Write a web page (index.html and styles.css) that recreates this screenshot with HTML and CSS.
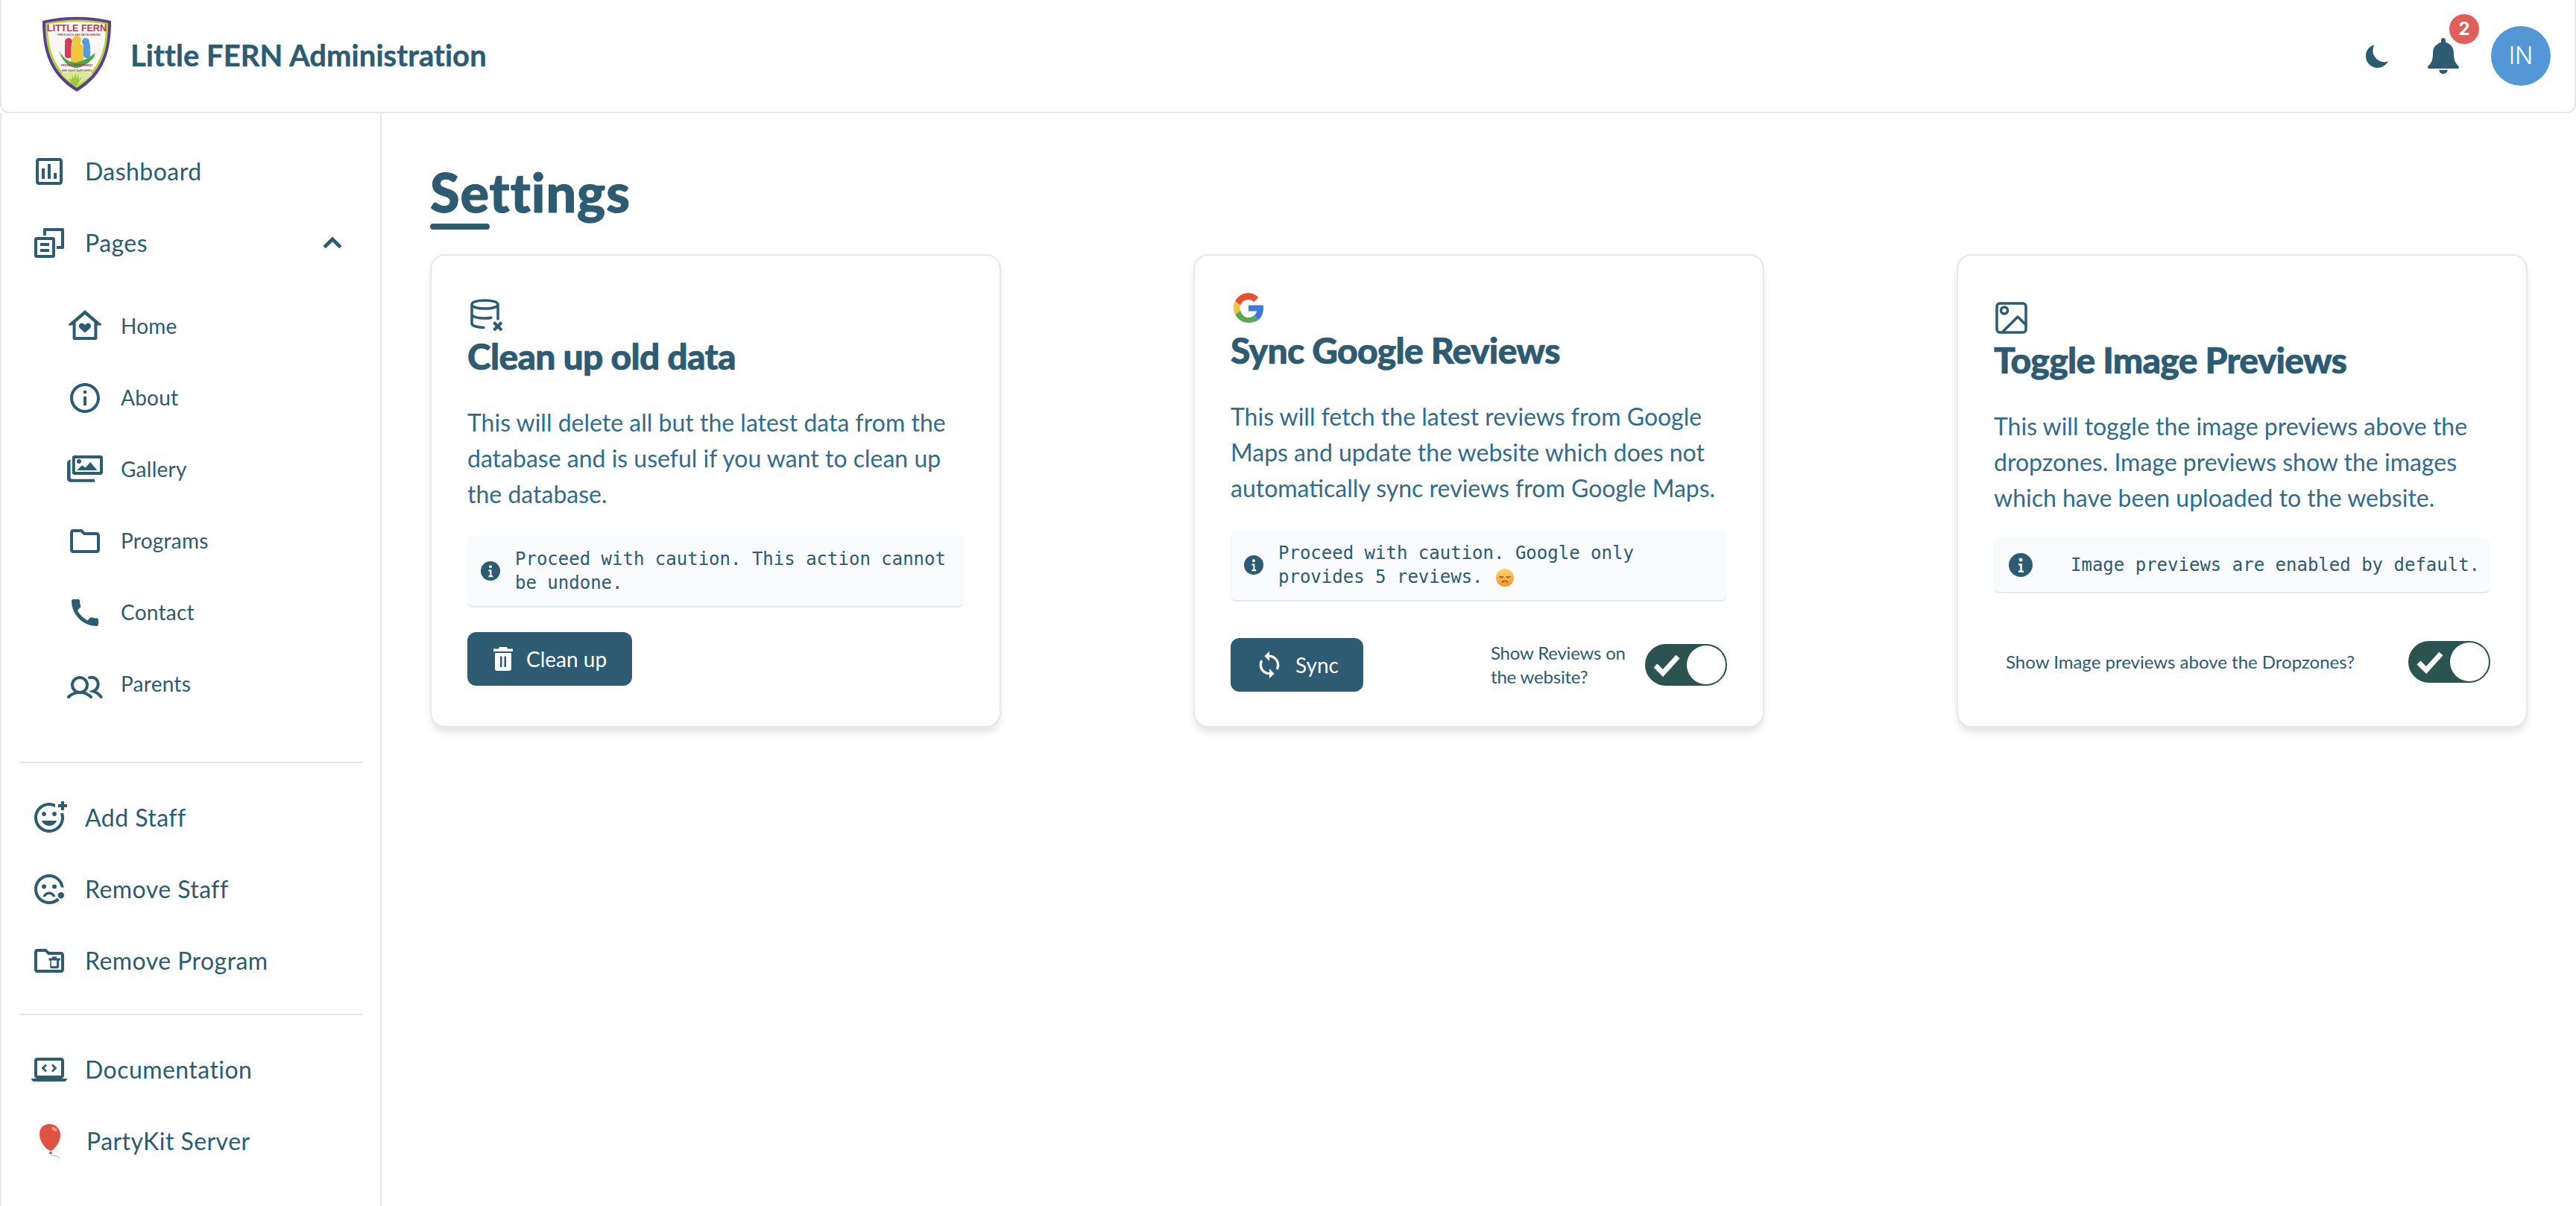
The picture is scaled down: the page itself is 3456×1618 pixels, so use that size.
FILE: index.html
```html
<!DOCTYPE html>
<html lang="en">
<head>
<meta charset="utf-8">
<title>Little FERN Administration</title>
<link rel="stylesheet" href="styles.css">
</head>
<body>
<header class="topbar">
  <div class="brand">
    <svg class="logo" viewBox="0 0 94 102">
      <path d="M1 6C30-1 64-1 93 6 93 45 85 78 47 101 9 78 1 45 1 6Z" fill="#5a3d97"/>
      <path d="M5 9C32 3 62 3 89 9 89 45 81 74 47 96 13 74 5 45 5 9Z" fill="#b4d334"/>
      <path d="M8 11C33 6 61 6 86 11 86 44 78 71 47 92 16 71 8 44 8 11Z" fill="#f7f8f2"/>
      <path d="M26 77C40 72 54 72 69 77 62 84 54 89 47 92 40 88 32 84 26 77Z" fill="#dbe89a"/>
      <text class="logo-name" x="47" y="20" text-anchor="middle">LITTLE FERN</text>
      <text class="logo-sub" x="50" y="25.500" text-anchor="middle">PRE SCHOOL AND DAY BOARDING</text>
      <rect x="31" y="35" width="9" height="21" rx="4" fill="#d6395a"/>
      <rect x="56" y="35" width="9" height="21" rx="4" fill="#5a9bd5"/>
      <path d="M39 42c0-4 3-6 8-6s9 2 9 6v20H39z" fill="#efc63c"/>
      <circle cx="47" cy="32" r="6" fill="#efc63c"/>
      <circle cx="36" cy="34" r="5" fill="#d6395a"/>
      <circle cx="59" cy="34" r="5" fill="#5a9bd5"/>
      <path d="M23 46C30 58 38 62 46 62 55 60 62 56 72 49L70 55C62 64 52 70 44 69 34 67 27 58 23 46Z" fill="#4aa64a"/>
      <text class="logo-sub" x="47" y="67" text-anchor="middle">FRIENDLY ENVIRONMENT</text>
      <text class="logo-sub" x="47" y="73.500" text-anchor="middle">AND RIGHT NURTURING</text>
      <path d="M41 92 37 82l3 3 1-7 2 6 2-8 2 8 2-7 1 8 4-4-5 9-3 3z" fill="#9cc73a"/>
    </svg>
    <span class="brand-name">Little FERN Administration</span>
  </div>
  <div class="top-actions">
    <svg class="moon" viewBox="0 0 30 32"><path d="M11.500 1C4.700 3 0 9 0 16.200 0 24.900 7 32 15.700 32 21.500 32 26.700 28.800 30 23.500 28.800 24 27.400 24.300 25.500 24.300 16.500 24.300 9.500 17 9.500 9.800 9.500 6.500 10.200 3.500 11.500 1Z"/></svg>
    <div class="bell-wrap">
      <svg class="bell" viewBox="0 0 42 48"><path d="M21 48c3.200 0 5.700-2.400 5.700-5.300H15.300C15.300 45.600 17.800 48 21 48ZM38.500 34.500c-2-3-3.500-5.800-3.500-14.500 0-7-4.700-12.700-11-14.300V3c0-1.700-1.300-3-3-3s-3 1.300-3 3v2.700C11.700 7.300 7 13 7 20c0 8.700-1.500 11.500-3.500 14.500C2 36.800 0 37.500 0 39c0 1.200.8 2 2 2h38c1.200 0 2-.8 2-2 0-1.500-2-2.200-3.500-4.500Z"/></svg>
      <span class="badge">2</span>
    </div>
    <div class="avatar">IN</div>
  </div>
</header>

<div class="shell">
  <aside class="sidebar">
    <nav class="nav-group">
      <a class="nav-row">
        <svg class="nav-icon" viewBox="0 0 24 24"><path d="M19 3H5c-1.100 0-2 .9-2 2v14c0 1.100.9 2 2 2h14c1.100 0 2-.9 2-2V5c0-1.100-.9-2-2-2zm0 16H5V5h14v14zM7 10h2v7H7zm4-3h2v10h-2zm4 6h2v4h-2z"/></svg>
        <span class="nav-label">Dashboard</span>
      </a>
      <a class="nav-row">
        <svg class="nav-icon" viewBox="0 0 24 24"><path d="M3.500 8h11c.8 0 1.500.7 1.500 1.500v11c0 .8-.7 1.500-1.500 1.500h-11C2.700 22 2 21.300 2 20.500v-11C2 8.700 2.700 8 3.500 8Zm.5 2v10h10V10ZM8 2.900C8 2.400 8.400 2 8.900 2h12.200c.5 0 .9.4.9.9v12.200c0 .5-.4.9-.9.9H17v-2h3V4H10v3H8ZM6 12h6v2H6Zm0 4h6v2H6Z"/></svg>
        <span class="nav-label">Pages</span>
        <svg class="chevron" viewBox="0 0 24 24"><path d="M12 8l-6 6 1.410 1.410L12 10.830l4.590 4.580L18 14z"/></svg>
      </a>
      <ul class="sub-nav">
        <li class="sub-row">
          <svg class="nav-icon" viewBox="0 0 24 24"><path fill-rule="evenodd" d="M12 1 1 10.500v.7h2.800V20c0 .6.400 1 1 1h14.400c.6 0 1-.4 1-1v-8.800H23v-.7ZM5.800 19V9.300L12 4l6.200 5.300V19Z"/><path d="M12 16.300l-3.500-3.200c-1.800-1.900.9-4.400 2.700-2.800l.8.700.8-.7c1.800-1.600 4.500.9 2.700 2.800Z"/></svg>
          <span class="nav-label">Home</span>
        </li>
        <li class="sub-row">
          <svg class="nav-icon" viewBox="0 0 24 24"><path d="M11 7h2v2h-2zm0 4h2v6h-2zm1-9C6.480 2 2 6.480 2 12s4.480 10 10 10 10-4.480 10-10S17.520 2 12 2zm0 18c-4.410 0-8-3.590-8-8s3.590-8 8-8 8 3.590 8 8-3.590 8-8 8z"/></svg>
          <span class="nav-label">About</span>
        </li>
        <li class="sub-row">
          <svg class="nav-icon" viewBox="0 0 24 24"><path fill-rule="evenodd" d="M4.900 2.500h17.600c.8 0 1.500.7 1.500 1.500v10c0 .8-.7 1.500-1.500 1.500H4.900c-.8 0-1.500-.7-1.500-1.500V4c0-.8.7-1.500 1.500-1.500Zm.5 2v9h16.600v-9Z"/><path d="M2.300 5.300v12c0 .6.500 1.100 1.100 1.100h15.100v2H2.500C1.100 20.400 0 19.300 0 18V7.800c0-1.300 1-2.300 2.300-2.500ZM8 5a1.500 1.500 0 1 1 0 3 1.500 1.500 0 0 1 0-3Zm-1.500 7.500 3.600-3.400 2.200 1.600 3.300-3.700 4.600 5.500Z"/></svg>
          <span class="nav-label">Gallery</span>
        </li>
        <li class="sub-row">
          <svg class="nav-icon" viewBox="0 0 24 24"><path d="M9.170 6l2 2H20v10H4V6h5.170M10 4H4c-1.100 0-1.990.9-1.990 2L2 18c0 1.100.9 2 2 2h16c1.100 0 2-.9 2-2V8c0-1.100-.9-2-2-2h-8l-2-2z"/></svg>
          <span class="nav-label">Programs</span>
        </li>
        <li class="sub-row">
          <svg class="nav-icon" viewBox="0 0 24 24"><path d="M21 15.900v4c0 .6-.5 1.100-1 1.100C10.700 21 3 13.300 3 4c0-.6.500-1 1.100-1H7.500c.6 0 1 .4 1 1 0 1.200.2 2.400.6 3.500.1.400 0 .7-.3 1l-1.800 2c1.400 2.900 3.600 5 6.700 6.700l1.800-1.800c.3-.3.700-.4 1-.3 1.100.4 2.300.6 3.500.6.6 0 1 .5 1 1.200Z"/></svg>
          <span class="nav-label">Contact</span>
        </li>
        <li class="sub-row">
          <svg class="nav-icon" viewBox="0 0 24 24"><path class="line-icon" d="M1 20.500c1.500-1.500 3.500-2.500 6-3h3c2.500.5 4.500 1.500 6 3M8.500 17.500a5 5 0 1 1 0-10 5 5 0 1 1 0 10ZM15 7.600c3-.9 5.800 1 5.800 4.400 0 2-1.200 3.800-3.300 4.700 2 .6 3.700 1.700 5.300 3.800"/></svg>
          <span class="nav-label">Parents</span>
        </li>
      </ul>
    </nav>
    <hr class="rule rule-first">
    <nav class="nav-group">
      <a class="nav-row">
        <svg class="nav-icon" viewBox="0 0 24 24"><path d="M7 9.500C7 8.670 7.670 8 8.500 8s1.500.67 1.500 1.500S9.330 11 8.500 11 7 10.330 7 9.500zm5 8c2.330 0 4.310-1.460 5.110-3.500H6.890c.8 2.040 2.780 3.500 5.110 3.500zm3.500-6.500c.83 0 1.500-.67 1.500-1.500S16.330 8 15.500 8 14 8.670 14 9.500s.67 1.500 1.500 1.500zM22 1h-2v2h-2v2h2v2h2V5h2V3h-2V1zm-2 11c0 4.420-3.580 8-8 8s-8-3.580-8-8 3.580-8 8-8c1.460 0 2.820.4 4 1.080V2.840A9.929 9.929 0 0011.990 2C6.470 2 2 6.480 2 12s4.470 10 9.990 10C17.520 22 22 17.520 22 12c0-1.050-.17-2.050-.47-3h-2.130c.38.93.6 1.940.6 3z"/></svg>
        <span class="nav-label">Add Staff</span>
      </a>
      <a class="nav-row">
        <svg class="nav-icon" viewBox="0 0 24 24"><path d="M12 2C6.470 2 2 6.480 2 12s4.470 10 10 10c2.700 0 5.100-1 6.900-2.800l-1.500-1.300C16 19.200 14.100 20 12 20c-4.420 0-8-3.580-8-8s3.580-8 8-8c4 0 7.300 2.900 7.900 6.800l2 .1C21.300 5.900 17.100 2 12 2ZM8.500 8.700a1.500 1.500 0 1 0 0 3 1.500 1.500 0 0 0 0-3Zm7 0a1.500 1.500 0 1 0 0 3 1.500 1.500 0 0 0 0-3ZM7.700 17h1.900c.5-1 1.300-1.500 2.400-1.500s1.900.5 2.400 1.500h1.900c-.7-1.900-2.300-3.200-4.300-3.200s-3.600 1.300-4.300 3.200ZM20 14c-1.300 0-2.200 1-2.200 2.100 0 1.200 1 2.200 2.100 2.200s2.100-1 2.100-2.200c0-1.100-.8-2.100-2-2.100Z"/></svg>
        <span class="nav-label">Remove Staff</span>
      </a>
      <a class="nav-row">
        <svg class="nav-icon" viewBox="0 0 24 24"><path d="M10 4H4c-1.100 0-2 .9-2 2v12c0 1.100.9 2 2 2h16c1.100 0 2-.9 2-2V8c0-1.100-.9-2-2-2h-8Zm-.8 2 2 2H20v10H4V6Z"/><path d="M14 9.200h3v1h2.500v1.600h-.9V16c0 .6-.5 1.100-1.100 1.100h-3.800c-.6 0-1.100-.5-1.100-1.100v-4.200h-.9v-1.600H14Zm-.6 2.600v3.800h3.600v-3.800Z"/></svg>
        <span class="nav-label">Remove Program</span>
      </a>
    </nav>
    <hr class="rule rule-second">
    <nav class="nav-group">
      <a class="nav-row">
        <svg class="nav-icon" viewBox="0 0 24 24"><path d="M20 18c1.100 0 2-.9 2-2V6c0-1.100-.9-2-2-2H4c-1.100 0-2 .9-2 2v10c0 1.100.9 2 2 2H0c0 1.100.9 2 2 2h20c1.100 0 2-.9 2-2h-4zM4 6h16v10H4V6z"/><path d="M9.500 8.300 6.800 11l2.700 2.700 1-1L8.800 11l1.700-1.700Zm5 0-1 1 1.700 1.700-1.700 1.700 1 1 2.700-2.700Z"/></svg>
        <span class="nav-label">Documentation</span>
      </a>
      <a class="nav-row nav-row-party">
        <svg class="nav-icon" viewBox="0 0 48 48">
          <path d="M11 14C11 6 17 1 24.500 1 32 1 39 7 39 16 39 26 31 35 26.500 37 22 37 11 27 11 14Z" fill="#e05243"/>
          <ellipse cx="31" cy="8" rx="4" ry="2.200" transform="rotate(35 31 8)" fill="#f0978b"/>
          <path d="M26 37l-2.500 4h5Z" fill="#d23f32"/>
          <path class="string" d="M26 41c1 4 3 2 5 2.500 3 .5 5 1 7 3.500"/>
        </svg>
        <span class="nav-label">PartyKit Server</span>
      </a>
    </nav>
  </aside>

  <main class="content">
    <h1 class="page-title">Settings</h1>
    <div class="title-bar"></div>
    <section class="cards">
      <article class="card">
        <svg class="card-icon" viewBox="0 0 48 48"><path class="line-icon-thin" d="M6 11.500C6 8 14 6 23.500 6S41 8 41 11.500 33 17 23.500 17 6 15 6 11.500Zm0 0V37c0 3 6 5 16 5.500M41 11.500V31M6 24.500c0 3.500 8 5.500 17.500 5.500 3 0 6-.2 8.500-.8"/><path class="line-icon-x" d="M35.500 35.500l10.500 10.500M46 35.500 35.500 46"/></svg>
        <h2 class="card-title">Clean up old data</h2>
        <p class="card-text">This will delete all but the latest data from the database and is useful if you want to clean up the database.</p>
        <div class="alert">
          <svg class="alert-icon" viewBox="0 0 32 32"><circle cx="16" cy="16" r="16"/><path class="alert-i" d="M16 6.500a2.500 2.500 0 1 1 0 5 2.500 2.500 0 0 1 0-5ZM12.800 14h5v9.500H20v2.500h-7v-2.500h2.200V16.500h-2.400Z"/></svg>
          <span class="alert-text">Proceed with caution. This action cannot be undone.</span>
        </div>
        <button class="btn btn-clean">
          <svg class="btn-icon" viewBox="0 0 26 32"><path d="M8 0h10l1 2.500h7v3.500H0V2.500h7ZM2 8h22v21c0 1.700-1.300 3-3 3H5c-1.700 0-3-1.300-3-3Z"/><path class="btn-slit" d="M9 12.500h2.500V27H9Zm5.500 0H17V27h-2.500Z"/></svg>
          <span>Clean up</span>
        </button>
      </article>

      <article class="card">
        <svg class="card-icon" viewBox="0 0 48 48"><path fill="#e8502e" d="M24 13c2.800 0 5.300 1 7.300 2.900l6-6C33.700 6.400 29.200 4 24 4 16.200 4 9.500 8.500 6.200 15l7 5.400C14.800 16 19 13 24 13Z"/><path fill="#3f78d8" d="M44 24.500c0-1.400-.1-2.700-.4-4H24v8h11.200c-.5 2.500-2 4.700-4.200 6.100l6.800 5.300C41.800 36.200 44 30.900 44 24.500Z"/><path fill="#f6c33b" d="M13.200 27.700C12.800 26.500 12.500 25.300 12.500 24s.3-2.500.7-3.600l-7-5.400C4.800 17.700 4 20.800 4 24s.8 6.300 2.200 9Z"/><path fill="#58a755" d="M24 44c5.200 0 9.700-1.700 13.800-4.100L31 34.600c-2 1.400-4.300 2.400-7 2.400-5 0-9.200-3.400-10.800-9.300l-7 5.300C9.500 39.500 16.200 44 24 44Z"/></svg>
        <h2 class="card-title">Sync Google Reviews</h2>
        <p class="card-text">This will fetch the latest reviews from Google Maps and update the website which does not automatically sync reviews from Google Maps.</p>
        <div class="alert">
          <svg class="alert-icon" viewBox="0 0 32 32"><circle cx="16" cy="16" r="16"/><path class="alert-i" d="M16 6.500a2.500 2.500 0 1 1 0 5 2.500 2.500 0 0 1 0-5ZM12.800 14h5v9.500H20v2.500h-7v-2.500h2.200V16.500h-2.400Z"/></svg>
          <span class="alert-text">Proceed with caution. Google only provides 5 reviews. <svg class="sad-emoji" viewBox="0 0 24 24"><defs><linearGradient id="sad" x1="0" y1="0" x2="0" y2="1"><stop offset="0" stop-color="#fbd96a"/><stop offset="1" stop-color="#f2932a"/></linearGradient></defs><circle cx="12" cy="12" r="12" fill="url(#sad)"/><path class="sad-lines" d="M5 10.500c1.200 1 3 1.200 4.500.3M19 10.500c-1.200 1-3 1.200-4.500.3M8.500 18c2-2 5-2 7 0"/></svg></span>
        </div>
        <div class="action-row">
          <button class="btn btn-sync">
            <svg class="btn-icon-sync" viewBox="0 0 24 24"><path d="M12 4V1L8 5l4 4V6c3.310 0 6 2.690 6 6 0 1.010-.25 1.970-.7 2.800l1.460 1.460C19.540 15.030 20 13.570 20 12c0-4.420-3.580-8-8-8zm0 14c-3.310 0-6-2.690-6-6 0-1.010.25-1.970.7-2.800L5.240 7.740C4.460 8.970 4 10.430 4 12c0 4.420 3.580 8 8 8v3l4-4-4-4v3z"/></svg>
            <span>Sync</span>
          </button>
          <div class="toggle-field">
            <span class="toggle-label toggle-label-wrap">Show Reviews on the website?</span>
            <div class="toggle">
              <svg class="toggle-check" viewBox="0 0 36 32"><path d="M3 17l10 10L33 5"/></svg>
              <span class="toggle-thumb"></span>
            </div>
          </div>
        </div>
      </article>

      <article class="card">
        <svg class="card-icon" viewBox="0 0 48 48"><path class="line-icon-thin" d="M8 5h31c2.200 0 4 1.800 4 4v31c0 2.200-1.800 4-4 4H8c-2.200 0-4-1.800-4-4V9c0-2.200 1.800-4 4-4Zm4 38L32 23l11 11M14 10a4.500 4.500 0 1 1 0 9 4.500 4.500 0 1 1 0-9Z"/></svg>
        <h2 class="card-title">Toggle Image Previews</h2>
        <p class="card-text">This will toggle the image previews above the dropzones. Image previews show the images which have been uploaded to the website.</p>
        <div class="alert alert-single">
          <svg class="alert-icon" viewBox="0 0 32 32"><circle cx="16" cy="16" r="16"/><path class="alert-i" d="M16 6.500a2.500 2.500 0 1 1 0 5 2.500 2.500 0 0 1 0-5ZM12.800 14h5v9.500H20v2.500h-7v-2.500h2.200V16.500h-2.400Z"/></svg>
          <span class="alert-text">Image previews are enabled by default.</span>
        </div>
        <div class="toggle-row">
          <span class="toggle-label">Show Image previews above the Dropzones?</span>
          <div class="toggle">
            <svg class="toggle-check" viewBox="0 0 36 32"><path d="M3 17l10 10L33 5"/></svg>
            <span class="toggle-thumb"></span>
          </div>
        </div>
      </article>
    </section>
  </main>
</div>
</body>
</html>
```

FILE: styles.css
```css
* { box-sizing: border-box; }
html, body { margin: 0; height: 100%; }
body {
  background: #fff;
  color: #2c5b72;
  font-family: "Lato", "Noto Sans", sans-serif;
  overflow: hidden;
}
svg { display: block; flex: none; fill: currentColor; }

.topbar {
  height: 152px;
  display: flex;
  align-items: center;
  justify-content: space-between;
  border: 2px solid #e5e7eb;
  border-top: 0;
  border-radius: 0 0 12px 12px;
  padding: 0 32px 0 54px;
}
.brand { display: flex; align-items: center; gap: 25px; }
.logo { width: 94px; height: 102px; margin-top: -4px; }
.logo-name { font: 700 12.500px "Liberation Sans", sans-serif; fill: #c8325a; }
.logo-sub { font: 700 3.400px "Liberation Sans", sans-serif; fill: #a03a5a; }
.brand-name { font-size: 40px; font-weight: 700; letter-spacing: 0.05px; margin-top: -2px; -webkit-text-stroke: 0.4px currentColor; }

.top-actions { display: flex; align-items: center; }
.moon { width: 30px; height: 32px; }
.bell-wrap { position: relative; margin-left: 53px; }
.bell { width: 42px; height: 48px; }
.badge {
  position: absolute;
  left: 29px;
  top: -32px;
  width: 40px;
  height: 40px;
  border-radius: 50%;
  background: #e05f5a;
  color: #fff;
  font: 700 24px/40px "Inter", sans-serif;
  text-align: center;
}
.avatar {
  width: 80px;
  height: 80px;
  margin-left: 43px;
  border-radius: 50%;
  background: #5497d6;
  color: #fff;
  font: 300 32px/80px "Inter", sans-serif;
  text-align: center;
}

.shell { display: flex; height: calc(100vh - 152px); }
.sidebar {
  width: 512px;
  flex: none;
  border-left: 2px solid #e5e7eb;
  border-right: 2px solid #e5e7eb;
  padding: 30px 24px 0;
}
.nav-group { display: block; }
.nav-row {
  height: 96px;
  display: flex;
  align-items: center;
  gap: 24px;
  padding-left: 16px;
  font-size: 32px;
  letter-spacing: 0.45px;
}
.nav-label { margin-top: -2px; }
.nav-row-party { gap: 26px; }
.nav-icon { width: 48px; height: 48px; }
.chevron { width: 48px; height: 48px; margin-left: auto; margin-right: 16px; stroke: currentColor; stroke-width: 0.5; }
.sub-nav { list-style: none; margin: 16px 0 0; padding: 0; }
.sub-row {
  height: 96px;
  display: flex;
  align-items: center;
  gap: 24px;
  padding-left: 64px;
  font-size: 28px;
  letter-spacing: 0.25px;
}
.line-icon { fill: none; stroke: currentColor; stroke-width: 2; stroke-linecap: round; }
.string { fill: none; stroke: #7fb6e6; stroke-width: 1; }
.rule { border: 0; height: 2px; background: #e5e7eb; margin: 0; }
.rule-first { margin-top: 56px; margin-bottom: 25px; }
.rule-second { margin-top: 23px; margin-bottom: 25px; }

.content { flex: 1; padding: 0 65px; }
.page-title { margin: 65px 0 0; font-size: 72px; line-height: 80px; font-weight: 900; letter-spacing: 0.9px; -webkit-text-stroke: 1px currentColor; }
.title-bar { width: 80px; height: 8px; border-radius: 4px; background: #2c5b72; margin-top: 3px; }
.cards {
  margin-top: 33px;
  display: grid;
  grid-template-columns: repeat(3, 766px);
  justify-content: space-between;
}
.card {
  height: 635px;
  display: flex;
  flex-direction: column;
  justify-content: center;
  padding: 0 48px;
  border: 2px solid #e5e7eb;
  border-radius: 20px;
  background: #fff;
  box-shadow: 0 8px 12px -2px rgba(0, 0, 0, 0.12);
}
.card-icon { width: 48px; height: 48px; }
.line-icon-thin { fill: none; stroke: currentColor; stroke-width: 3.500; stroke-linecap: round; stroke-linejoin: round; }
.line-icon-x { fill: none; stroke: currentColor; stroke-width: 4; }
.card-title { margin: 0 0 32px; font-size: 48px; line-height: 66px; font-weight: 900; letter-spacing: -0.7px; -webkit-text-stroke: 0.7px currentColor; }
.card-text { margin: 0; font-size: 32px; line-height: 48px; color: #336c8b; }

.alert {
  margin-top: 31px;
  display: flex;
  align-items: center;
  gap: 20px;
  padding: 16px 18px 15px;
  border-bottom: 2px solid #e5e7eb;
  border-radius: 8px;
  background: #f8fafc;
}
.alert-icon { width: 26px; height: 26px; }
.alert-i { fill: #f8fafc; }
.alert-text { font: 400 24px/32px "DejaVu Sans Mono", "Liberation Mono", monospace; }
.sad-emoji { display: inline-block; width: 24px; height: 24px; vertical-align: -5px; margin-left: 3px; }
.sad-lines { fill: none; stroke: #7a4a12; stroke-width: 1.500; stroke-linecap: round; }
.alert-single { margin-top: 30px; padding: 20px 0 20px 20px; gap: 51px; white-space: nowrap; }
.alert-single .alert-icon { width: 32px; height: 32px; }

.btn {
  height: 72px;
  display: inline-flex;
  align-items: center;
  border: 0;
  border-radius: 12px;
  background: #2c5b72;
  color: #fff;
  font-family: inherit;
  font-size: 28px;
}
.btn-clean { width: 221px; margin-top: 33px; padding: 0 0 0 35px; gap: 18px; }
.btn-icon { width: 26px; height: 32px; }
.btn-slit { fill: #2c5b72; }
.btn-sync { width: 178px; padding: 0 0 0 32px; gap: 15px; }
.btn-icon-sync { width: 40px; height: 40px; }
.action-row { margin-top: 49px; display: flex; align-items: center; justify-content: space-between; }
.toggle-field { display: flex; align-items: center; gap: 17px; }
.toggle-label { font-size: 24px; line-height: 32px; }
.toggle-label-wrap { width: 190px; letter-spacing: -0.2px; }
.toggle-row { margin-top: 64px; display: flex; align-items: center; justify-content: space-between; padding-left: 16px; }
.toggle {
  width: 110px;
  height: 56px;
  flex: none;
  display: flex;
  align-items: center;
  justify-content: space-between;
  padding: 0 0 0 9px;
  border: 2px solid #2a5352;
  border-radius: 28px;
  background: #2a5352;
}
.toggle-check { width: 36px; height: 32px; fill: none; stroke: #fff; stroke-width: 7; }
.toggle-thumb { width: 52px; height: 52px; border-radius: 50%; background: #fff; }
```
